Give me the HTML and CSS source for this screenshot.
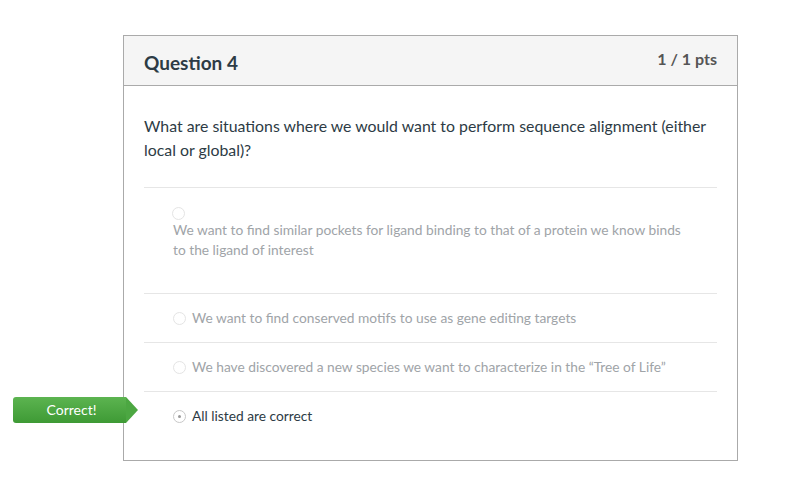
FILE: index.html
```html
<!DOCTYPE html>
<html>
<head>
<meta charset="utf-8">
<link rel="stylesheet" href="styles.css">
</head>
<body>
<div class="page">
  <div class="question">
    <div class="q-header">
      <h2 class="q-title">Question 4</h2>
      <span class="q-pts">1 / 1 pts</span>
    </div>
    <div class="q-body">
      <p class="q-text">What are situations where we would want to perform sequence alignment (either local or global)?</p>
      <div class="answers">
        <div class="answer stacked">
          <span class="radio"></span>
          <span class="a-text">We want to find similar pockets for ligand binding to that of a protein we know binds to the ligand of interest</span>
        </div>
        <div class="answer">
          <span class="radio"></span>
          <span class="a-text">We want to find conserved motifs to use as gene editing targets</span>
        </div>
        <div class="answer">
          <span class="radio"></span>
          <span class="a-text">We have discovered a new species we want to characterize in the “Tree of Life”</span>
        </div>
        <div class="answer selected">
          <span class="badge">Correct!</span>
          <span class="radio checked"></span>
          <span class="a-text">All listed are correct</span>
        </div>
      </div>
    </div>
  </div>
</div>
</body>
</html>
```
FILE: styles.css
```css
html, body {
  margin: 0;
  padding: 0;
  background: #fff;
}
body {
  font-family: Lato, "Noto Sans", sans-serif;
  color: #2d3b45;
}
.page {
  padding: 35px 0 0 123px;
}
.question {
  width: 613px;
  border: 1px solid #aaaaaa;
  background: #fff;
}
.q-header {
  display: flex;
  justify-content: space-between;
  align-items: flex-start;
  height: 49px;
  background: #f5f5f5;
  border-bottom: 1px solid #aaaaaa;
  padding: 0 20px 0 20px;
}
.q-title {
  margin: 15px 0 0 0;
  font-size: 19px;
  font-weight: 700;
  color: #2d3b45;
  line-height: 24px;
}
.q-pts {
  margin-top: 13px;
  font-size: 16px;
  font-weight: 700;
  color: #555555;
  line-height: 20px;
}
.q-body {
  padding: 28px 20px 20px 20px;
}
.q-text {
  margin: 0;
  font-size: 15.85px;
  line-height: 24px;
  color: #2d3b45;
  padding-bottom: 25px;
  border-bottom: 1px solid #e6e6e6;
}
.answers {
  display: flex;
  flex-direction: column;
}
.answer {
  position: relative;
  display: flex;
  align-items: center;
  gap: 6px;
  padding: 14px 30px 14px 29px;
  border-bottom: 1px solid #e6e6e6;
  font-size: 13.75px;
  line-height: 20px;
  color: #a0a4a8;
}
.answer.stacked {
  flex-direction: column;
  align-items: flex-start;
  gap: 0;
  padding-top: 18px;
  padding-bottom: 33px;
}
.answer.selected {
  border-bottom: none;
  color: #2d3b45;
}
.radio {
  box-sizing: border-box;
  width: 13px;
  height: 13px;
  border-radius: 50%;
  border: 1px solid #e4e4e4;
  background: #fff;
  flex: none;
  position: relative;
}
.stacked .radio {
  margin-left: -1px;
  margin-top: 1px;
}
.radio.checked {
  border-color: #c8c8c8;
}
.radio.checked::after {
  content: "";
  position: absolute;
  left: 4px;
  top: 4px;
  width: 3px;
  height: 3px;
  border-radius: 50%;
  background: #9a9a9a;
}
.badge {
  position: absolute;
  left: -131px;
  top: 5px;
  width: 113px;
  height: 26px;
  line-height: 26px;
  text-align: center;
  color: #fff;
  font-size: 14px;
  background: linear-gradient(#5cb450, #3e9a35);
  border-radius: 3px 0 0 3px;
  box-sizing: border-box;
  padding-left: 4px;
}
.badge::after {
  content: "";
  position: absolute;
  right: -12px;
  top: 0;
  border-top: 13px solid transparent;
  border-bottom: 13px solid transparent;
  border-left: 12px solid #4ca742;
}
```
